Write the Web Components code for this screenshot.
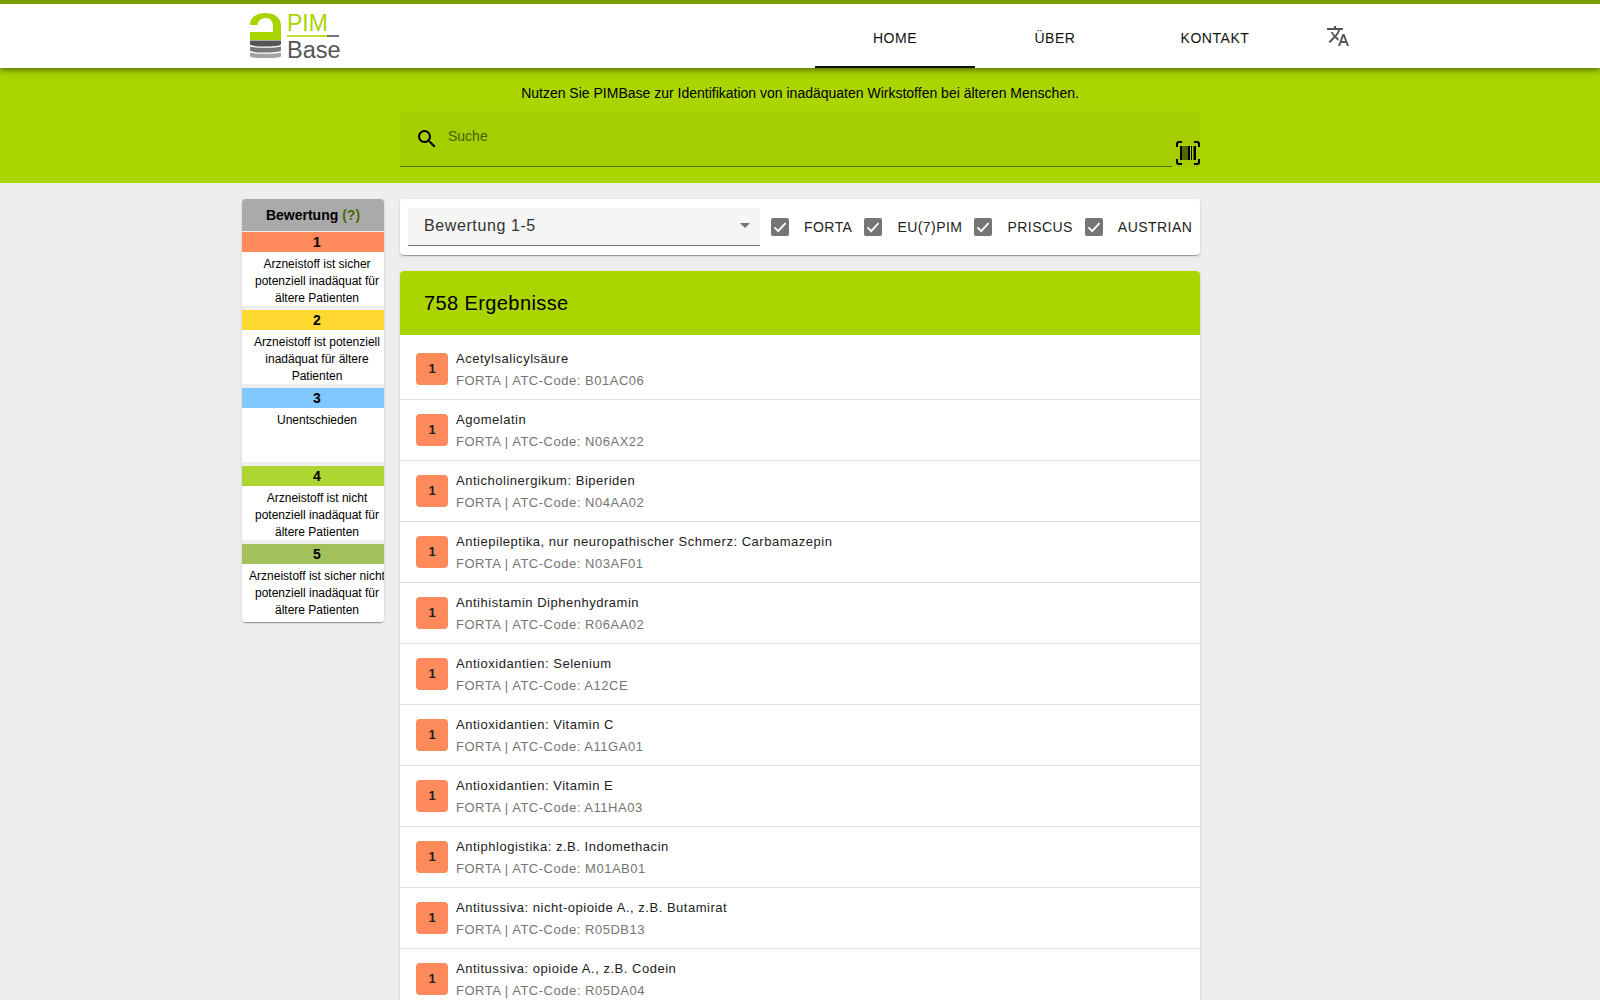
<!DOCTYPE html>
<html lang="de"><head><meta charset="utf-8"><title>PIMBase</title>
<style>
html{overflow:hidden}
html,body{margin:0;padding:0;background:#eee}
body{font-family:"Liberation Sans",sans-serif;color:#000;height:1000px;overflow:hidden}
</style></head><body>
<pim-header></pim-header>
<pim-banner></pim-banner>
<pim-layout>
  <rating-legend slot="side">
    <legend-item n="1" color="#ff8a5c">Arzneistoff ist sicher potenziell inadäquat für ältere Patienten</legend-item>
    <legend-item n="2" color="#ffd830">Arzneistoff ist potenziell inadäquat für ältere Patienten</legend-item>
    <legend-item n="3" color="#80c8ff">Unentschieden</legend-item>
    <legend-item n="4" color="#aed632">Arzneistoff ist nicht potenziell inadäquat für ältere Patienten</legend-item>
    <legend-item n="5" color="#a2c15a">Arzneistoff ist sicher nicht potenziell inadäquat für ältere Patienten</legend-item>
  </rating-legend>
  <filter-bar>
    <check-box>FORTA</check-box><check-box>EU(7)PIM</check-box><check-box>PRISCUS</check-box><check-box>AUSTRIAN</check-box>
  </filter-bar>
  <result-panel>
    <result-row name="Acetylsalicylsäure" code="B01AC06"></result-row>
    <result-row name="Agomelatin" code="N06AX22"></result-row>
    <result-row name="Anticholinergikum: Biperiden" code="N04AA02"></result-row>
    <result-row name="Antiepileptika, nur neuropathischer Schmerz: Carbamazepin" code="N03AF01"></result-row>
    <result-row name="Antihistamin Diphenhydramin" code="R06AA02"></result-row>
    <result-row name="Antioxidantien: Selenium" code="A12CE"></result-row>
    <result-row name="Antioxidantien: Vitamin C" code="A11GA01"></result-row>
    <result-row name="Antioxidantien: Vitamin E" code="A11HA03"></result-row>
    <result-row name="Antiphlogistika: z.B. Indomethacin" code="M01AB01"></result-row>
    <result-row name="Antitussiva: nicht-opioide A., z.B. Butamirat" code="R05DB13"></result-row>
    <result-row name="Antitussiva: opioide A., z.B. Codein" code="R05DA04"></result-row>
  </result-panel>
</pim-layout>
<script>
function def(name, html, init){
  customElements.define(name, class extends HTMLElement{
    constructor(){super();const r=this.attachShadow({mode:'open'});r.innerHTML=html;}
    connectedCallback(){ if(init) init(this,this.shadowRoot); }
  });
}
def('pim-logo',`<style>
:host{display:flex;align-items:flex-start;height:64px}
svg{display:block;width:32px;height:54px;margin-top:1px;flex:none;margin-left:-1px}
.t{margin:7px 0 0 6px;width:52px;font:22px/22px "Liberation Sans",sans-serif}
.p{color:#a9d400;height:24px;line-height:24px;font-size:23px}
.l{height:2px;background:linear-gradient(90deg,#bfdc3a 0 40px,#777 40px)}
.b{color:#555;line-height:26px;height:26px;font-size:23.5px}
</style>
<svg viewBox="0 0 32 54"><path d="M1 20C1 12 8 8 16.500 8 25 8 32 12 32 21V35H1V27H24V21C24 16 21 13 16.500 13 12 13 9 16 8.500 20Z" fill="#a9d400"/>
<path d="M1 35.500h31v3.500c0 1.500-4 2.500-15.500 2.500S1 40.500 1 39z" fill="#555"/>
<path d="M1 41.500c3 1 9 1.300 15.500 1.300s12.500-.3 15.500-1.300v3.500c0 1.500-4 2.500-15.500 2.500S1 46.500 1 45z" fill="#777"/>
<path d="M1 47.500c3 1 9 1.300 15.500 1.300s12.500-.3 15.500-1.300V51c0 1.500-4 2-15.500 2S1 52.500 1 51z" fill="#a3a3a3"/></svg>
<div class="t"><div class="p">PIM</div><div class="l"></div><div class="b">Base</div></div>`);
def('nav-tab',`<style>
:host{display:flex;width:160px;height:64px;align-items:center;justify-content:center;box-sizing:border-box;
font:400 14px "Liberation Sans",sans-serif;letter-spacing:.55px;color:#111;text-transform:uppercase;padding-top:3px}
:host([active]){box-shadow:inset 0 -2px #111}
</style><slot></slot>`);
def('pim-header',`<style>
:host{display:flex;position:relative;z-index:2;height:64px;background:#fff;border-top:4px solid #7a9e00;padding:0 219px 0 250px;
box-shadow:0 2px 4px -1px rgba(0,0,0,.25),0 4px 5px rgba(0,0,0,.18),0 1px 10px rgba(0,0,0,.12)}
.s{flex:1}
.i{width:86px;display:flex;align-items:center;justify-content:center}
svg{width:24px;height:24px;display:block;fill:#555;margin-top:-1px}
</style><pim-logo></pim-logo><div class="s"></div>
<nav-tab active>Home</nav-tab><nav-tab>Über</nav-tab><nav-tab>Kontakt</nav-tab>
<div class="i"><svg viewBox="0 0 24 24"><path d="M12.870 15.070l-2.540-2.510.03-.03c1.740-1.940 2.980-4.170 3.710-6.530H17V4h-7V2H8v2H1v1.990h11.170C11.500 7.920 10.440 9.750 9 11.350 8.070 10.320 7.300 9.190 6.690 8h-2c.73 1.630 1.730 3.170 2.980 4.560l-5.090 5.020L4 19l5-5 3.110 3.110.76-2.040zM18.500 10h-2L12 22h2l1.120-3h4.750L21 22h2l-4.500-12zm-2.620 7l1.620-4.330L19.120 17h-3.240z"/></svg></div>`);
def('pim-banner',`<style>
:host{display:block;height:115px;background:#aad500;box-sizing:border-box;padding-top:17px}
p{margin:0;text-align:center;font:14px/16px "Liberation Sans",sans-serif;color:#000}
.f{display:flex;width:800px;height:56px;margin:10px auto 0;background:rgba(0,0,0,.03);border-radius:4px 4px 0 0;box-sizing:border-box}
.in{flex:1;display:flex;border-bottom:1px solid #5c7300;height:56px;box-sizing:border-box}
.m{width:24px;height:24px;margin:16px 0 0 15px;flex:none}
.u{font:14px/16px "Liberation Sans",sans-serif;color:#466000;margin:17px 0 0 9px}
.b{width:24px;height:24px;margin:30px 0 0 4px;flex:none}
</style><p>Nutzen Sie PIMBase zur Identifikation von inadäquaten Wirkstoffen bei älteren Menschen.</p>
<div class="f"><div class="in">
<svg class="m" viewBox="0 0 24 24"><path d="M15.500 14h-.79l-.28-.27A6.471 6.471 0 0 0 16 9.500 6.500 6.500 0 1 0 9.500 16c1.610 0 3.090-.59 4.230-1.570l.27.28v.79l5 4.990L20.490 19l-4.990-5zm-6 0C7.010 14 5 11.990 5 9.500S7.010 5 9.500 5 14 7.010 14 9.500 11.990 14 9.500 14z"/></svg>
<div class="u">Suche</div></div>
<svg class="b" viewBox="0 0 24 24"><path d="M0 6V3a3 3 0 0 1 3-3h3v2H3a1 1 0 0 0-1 1v3zM18 0h3a3 3 0 0 1 3 3v3h-2V3a1 1 0 0 0-1-1h-3zM0 18h2v3a1 1 0 0 0 1 1h3v2H3a3 3 0 0 1-3-3zM22 18h2v3a3 3 0 0 1-3 3h-3v-2h3a1 1 0 0 0 1-1z"/><path d="M4 5h2.500v14H4zM7.500 5h1v14h-1zM9.500 5h1v14h-1zM11.500 5H14v14h-2.500zM15 5h1v14h-1zM17.500 5H20v14h-2.500z"/></svg></div>`);
def('pim-layout',`<style>
:host{display:flex;align-items:flex-start;padding:16px 0 0 242px;gap:16px}
.m{width:800px;flex:none}
.s{width:142px;flex:none}
</style><div class="s"><slot name="side"></slot></div><div class="m"><slot></slot></div>`);
def('rating-legend',`<style>
:host{display:block;width:142px;background:#eee;border-radius:4px;overflow:hidden;
box-shadow:0 2px 1px -1px rgba(0,0,0,.2),0 1px 1px rgba(0,0,0,.14),0 1px 3px rgba(0,0,0,.12)}
h3{margin:0 0 1px;height:32px;background:#aaa;font:700 14px/32px "Liberation Sans",sans-serif;text-align:center;color:#000}
h3 span{color:#4d6600}
.w{width:150px;display:flex;flex-direction:column;gap:4px}
</style><h3>Bewertung <span>(?)</span></h3><div class="w"><slot></slot></div>`);
def('legend-item',`<style>
:host{display:block;font:12px/17px "Liberation Sans",sans-serif;color:#000;text-align:center}
:host(:last-child) div{height:58px}
b{display:block;height:20px;font:700 14px/20px "Liberation Sans",sans-serif}
div{height:54px;background:#fff;padding:4px 0 0;box-sizing:border-box}
</style><b></b><div><slot></slot></div>`,(h,r)=>{const b=r.querySelector('b');b.textContent=h.getAttribute('n');b.style.background=h.getAttribute('color');});
def('check-box',`<style>
:host{display:flex;align-items:center;font:400 14px "Liberation Sans",sans-serif;letter-spacing:.45px;color:#222;text-transform:uppercase}
i{display:block;width:18px;height:18px;background:#757575;border-radius:2px;margin-right:15px;flex:none}
svg{display:block;width:18px;height:18px}
</style><i><svg viewBox="0 0 18 18"><path d="M3.500 9.400l3.700 3.700 7.300-8" fill="none" stroke="#fff" stroke-width="1.800"/></svg></i><slot></slot>`);
def('filter-bar',`<style>
:host{display:flex;align-items:center;height:56px;background:#fff;border-radius:4px;box-sizing:border-box;padding:0 8px;
box-shadow:0 2px 1px -1px rgba(0,0,0,.2),0 1px 1px rgba(0,0,0,.14),0 1px 3px rgba(0,0,0,.12)}
.sel{display:flex;flex:none;align-items:center;justify-content:space-between;width:352px;height:38px;box-sizing:border-box;background:#f5f5f5;border-bottom:1px solid #757575;border-radius:4px 4px 0 0;padding:0 10px 2px 16px;
font:400 16px "Liberation Sans",sans-serif;letter-spacing:.6px;color:#333}
.a{width:0;height:0;border:5px solid transparent;border-top-color:#757575;border-bottom:0;margin-top:0}
.c{display:flex;gap:12px;margin-left:11px;margin-top:-1px}
</style><div class="sel"><span>Bewertung 1-5</span><span class="a"></span></div><div class="c"><slot></slot></div>`);
def('result-panel',`<style>
:host{display:block;margin-top:16px;background:#fff;border-radius:4px 4px 0 0;overflow:hidden;
box-shadow:0 2px 1px -1px rgba(0,0,0,.2),0 1px 1px rgba(0,0,0,.14),0 1px 3px rgba(0,0,0,.12)}
h2{margin:0;height:64px;background:#aad500;padding:0 24px;font:400 20px/64px "Liberation Sans",sans-serif;letter-spacing:.4px;color:#000}
.l{padding-top:4px}
</style><h2>758 Ergebnisse</h2><div class="l"><slot></slot></div>`);
def('result-row',`<style>
:host{display:flex;align-items:center;height:61px;box-sizing:border-box;border-bottom:1px solid #ddd;padding-left:16px}
.n{width:32px;height:32px;background:#ff8a5c;border-radius:4px;font:700 13px/32px "Liberation Sans",sans-serif;text-align:center;color:#222;margin-right:8px;flex:none}
.t{padding-top:2px}
.p{font:400 13px/22px "Liberation Sans",sans-serif;letter-spacing:.52px;color:#222}
.q{font:400 13px/22px "Liberation Sans",sans-serif;letter-spacing:.52px;color:#757575}
</style><div class="n">1</div><div class="t"><div class="p"></div><div class="q"></div></div>`,(h,r)=>{
 r.querySelector('.p').textContent=h.getAttribute('name');
 r.querySelector('.q').textContent='FORTA | ATC-Code: '+h.getAttribute('code');});
</script>
</body></html>
